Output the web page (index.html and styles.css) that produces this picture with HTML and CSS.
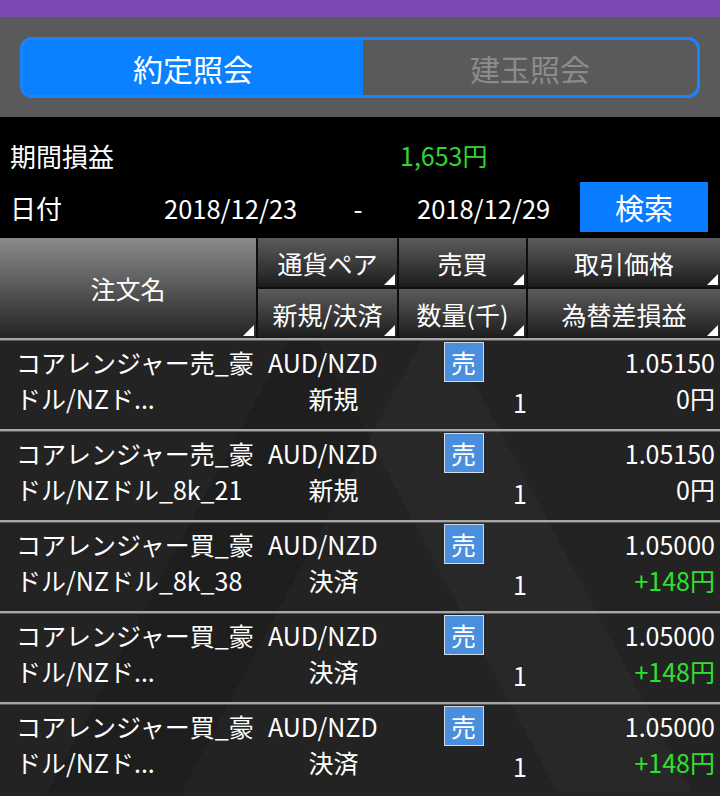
FILE: index.html
```html
<!DOCTYPE html>
<html lang="ja">
<head>
  <meta charset="UTF-8" />
  <meta name="viewport" content="width=device-width, initial-scale=1.0" />
  <title>約定照会</title>
  <link rel="stylesheet" href="styles.css">
</head>
<body>
  <div class="topbar"></div>

  <div class="tabs-wrap">
    <div class="tabs">
      <div class="tab active">約定照会</div>
      <div class="tab">建玉照会</div>
    </div>
  </div>

  <div class="summary">
    <div class="sum-row">
      <span class="label wide">期間損益</span>
      <span class="profit">1,653円</span>
    </div>
    <div class="date-row">
      <span class="label">日付</span>
      <span class="date from">2018/12/23</span>
      <span class="dash">-</span>
      <span class="date">2018/12/29</span>
      <button class="search">検索</button>
    </div>
  </div>

  <div class="head">
    <div class="hcell name">注文名</div>
    <div class="hcell">通貨ペア</div>
    <div class="hcell">売買</div>
    <div class="hcell">取引価格</div>
    <div class="hcell">新規/決済</div>
    <div class="hcell">数量(千)</div>
    <div class="hcell">為替差損益</div>
  </div>

  <div class="list">
    <div class="row">
      <div class="c-name"><div>コアレンジャー売_豪</div><div>ドル/NZド...</div></div>
      <div class="c-pair"><div class="pair">AUD/NZD</div><div class="kind">新規</div></div>
      <div class="c-side"><span class="badge">売</span><div class="qty">1</div></div>
      <div class="c-price"><div>1.05150</div><div>0円</div></div>
    </div>
    <div class="row">
      <div class="c-name"><div>コアレンジャー売_豪</div><div>ドル/NZドル_8k_21</div></div>
      <div class="c-pair"><div class="pair">AUD/NZD</div><div class="kind">新規</div></div>
      <div class="c-side"><span class="badge">売</span><div class="qty">1</div></div>
      <div class="c-price"><div>1.05150</div><div>0円</div></div>
    </div>
    <div class="row">
      <div class="c-name"><div>コアレンジャー買_豪</div><div>ドル/NZドル_8k_38</div></div>
      <div class="c-pair"><div class="pair">AUD/NZD</div><div class="kind">決済</div></div>
      <div class="c-side"><span class="badge">売</span><div class="qty">1</div></div>
      <div class="c-price"><div>1.05000</div><div class="plus">+148円</div></div>
    </div>
    <div class="row">
      <div class="c-name"><div>コアレンジャー買_豪</div><div>ドル/NZド...</div></div>
      <div class="c-pair"><div class="pair">AUD/NZD</div><div class="kind">決済</div></div>
      <div class="c-side"><span class="badge">売</span><div class="qty">1</div></div>
      <div class="c-price"><div>1.05000</div><div class="plus">+148円</div></div>
    </div>
    <div class="row">
      <div class="c-name"><div>コアレンジャー買_豪</div><div>ドル/NZド...</div></div>
      <div class="c-pair"><div class="pair">AUD/NZD</div><div class="kind">決済</div></div>
      <div class="c-side"><span class="badge">売</span><div class="qty">1</div></div>
      <div class="c-price"><div>1.05000</div><div class="plus">+148円</div></div>
    </div>
  </div>
</body>
</html>
```

FILE: styles.css
```css
body {
  margin: 0;
  padding: 0;
  background: #232323;
  color: #fff;
  font-family: "Noto Sans CJK JP", sans-serif;
  overflow: hidden;
}

.topbar {
  height: 17px;
  background: #7b49b1;
}

.tabs-wrap {
  background: #5a5a5a;
  padding: 20px 20px 19px;
}

.tabs {
  display: grid;
  grid-template-columns: 340px 1fr;
  height: 55px;
  border: 3px solid #1a84ff;
  border-radius: 12px;
  overflow: hidden;
}

.tab {
  display: flex;
  align-items: center;
  justify-content: center;
  font-size: 30px;
  color: #8c8c8c;
}

.tab.active {
  background: #0a82ff;
  color: #fff;
}

.summary {
  background: #000;
  padding: 20px 12px 6px 10px;
  font-size: 26px;
}

.sum-row {
  display: flex;
  align-items: center;
  height: 36px;
}

.label {
  width: 154px;
}

.label.wide {
  width: 390px;
}

.profit {
  color: #33d433;
  font-size: 25px;
}

.date-row {
  display: flex;
  align-items: center;
  height: 50px;
  margin-top: 9px;
}

.date {
  font-size: 25.5px;
}

.date.from {
  width: 170px;
}

.dash {
  width: 48px;
  text-align: center;
  margin-right: 35px;
}

.search {
  margin-left: auto;
  width: 128px;
  height: 50px;
  border: none;
  background: #0a7cff;
  color: #fff;
  font-family: inherit;
  font-size: 29px;
  padding: 0;
}

/* table header */
.head {
  display: grid;
  grid-template-columns: 256px 139px 127px 192px;
  grid-template-rows: 49px 49px;
  column-gap: 2px;
  row-gap: 2px;
  background: #0e0e0e;
}

.hcell {
  position: relative;
  display: flex;
  align-items: center;
  justify-content: center;
  font-size: 25px;
  background: linear-gradient(#5c5c5c, #1c1c1c);
}

.hcell.name {
  grid-row: span 2;
  background: linear-gradient(#8a8a8a, #242424);
}

.hcell::after {
  content: "";
  position: absolute;
  right: 2px;
  bottom: 2px;
  width: 11px;
  height: 11px;
  background: #fff;
  clip-path: polygon(100% 0, 100% 100%, 0 100%);
}

/* rows */
.list {
  background:
    linear-gradient(62deg, transparent 58%, rgba(255, 255, 255, 0.025) 58%, rgba(255, 255, 255, 0.025) 72%, transparent 72%),
    linear-gradient(118deg, transparent 30%, rgba(0, 0, 0, 0.15) 30%, rgba(0, 0, 0, 0.15) 44%, transparent 44%),
    #232323;
}

.row {
  display: grid;
  grid-template-columns: 258px 141px 129px 192px;
  height: 89px;
  border-top: 2px solid #a6a6a6;
  box-shadow: inset 0 1px 0 #5a5a5a;
  font-size: 25px;
  line-height: 36px;
}

.c-name {
  padding: 4px 0 0 16px;
  white-space: nowrap;
  overflow: hidden;
}

.c-pair {
  padding: 4px 0 0 10px;
}

.kind {
  text-align: center;
}

.c-side {
  display: flex;
  flex-direction: column;
  align-items: center;
  padding-top: 2px;
}

.badge {
  width: 38px;
  height: 38px;
  border: 1px solid #d4dbe4;
  background: #4a8fdd;
  text-align: center;
  line-height: 38px;
  font-size: 25px;
}

.qty {
  align-self: flex-end;
  margin-top: 2px;
  padding-right: 1px;
}

.c-price {
  padding: 4px 5px 0 0;
  text-align: right;
}

.plus {
  color: #2fe02f;
}
```
